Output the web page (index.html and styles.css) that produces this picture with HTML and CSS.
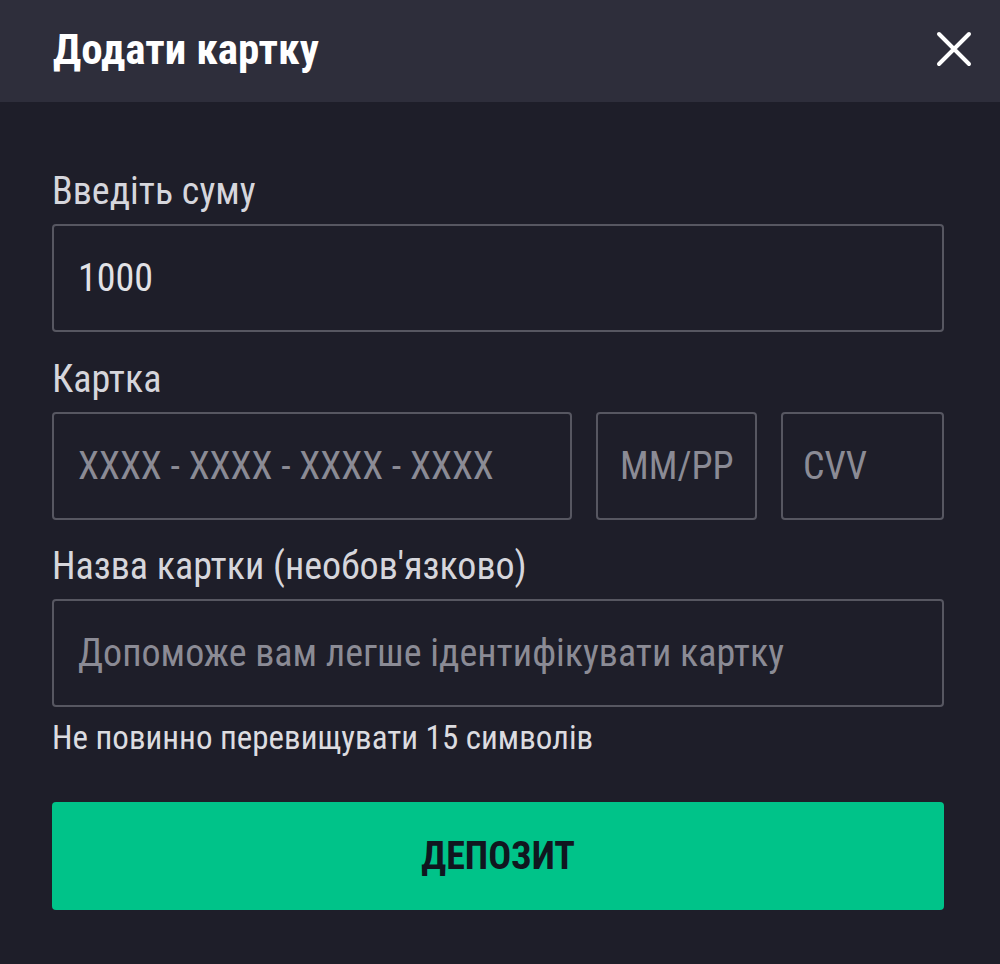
FILE: index.html
```html
<!DOCTYPE html>
<html lang="uk">
<head>
<meta charset="utf-8">
<title>Додати картку</title>
<link rel="stylesheet" href="styles.css">
</head>
<body>
<div class="modal">
  <header class="modal-header">
    <h1 class="modal-title">Додати картку</h1>
    <button class="close-btn" aria-label="Закрити">
      <svg viewBox="0 0 36 36" width="36" height="36"><path d="M3 3 L33 33 M33 3 L3 33" stroke="#ffffff" stroke-width="4" stroke-linecap="round" fill="none"/></svg>
    </button>
  </header>
  <div class="modal-body">
    <div class="field">
      <label class="field-label">Введіть суму</label>
      <div class="input"><span class="value">1000</span></div>
    </div>
    <div class="field field-card">
      <label class="field-label">Картка</label>
      <div class="card-row">
        <div class="input card-number"><span class="placeholder">XXXX - XXXX - XXXX - XXXX</span></div>
        <div class="input card-exp"><span class="placeholder">MM/PP</span></div>
        <div class="input card-cvv"><span class="placeholder">CVV</span></div>
      </div>
    </div>
    <div class="field field-last">
      <label class="field-label">Назва картки (необов'язково)</label>
      <div class="input"><span class="placeholder">Допоможе вам легше ідентифікувати картку</span></div>
      <div class="hint">Не повинно перевищувати 15 символів</div>
    </div>
    <button class="deposit-btn">ДЕПОЗИТ</button>
  </div>
</div>
</body>
</html>
```
FILE: styles.css
```css
* { box-sizing: border-box; }
html, body {
  margin: 0;
  padding: 0;
  background: #1e1e29;
  font-family: "Roboto Condensed", Roboto, "Liberation Sans", sans-serif;
}
.modal {
  width: 1000px;
  min-height: 964px;
  background: #1e1e29;
}
.modal-header {
  height: 102px;
  background: #2e2e3b;
  display: flex;
  align-items: center;
  justify-content: space-between;
  padding: 0 28px 4px 53px;
}
.modal-title {
  margin: 0;
  font-size: 43px;
  line-height: 48px;
  font-weight: 700;
  color: #ffffff;
}
.close-btn {
  background: none;
  border: 0;
  padding: 0;
  width: 36px;
  height: 36px;
  cursor: pointer;
}
.close-btn svg { display: block; }
.modal-body {
  padding: 69px 56px 0 52px;
}
.field { margin-bottom: 27px; }
.field-card { margin-bottom: 26px; }
.field-last { margin-bottom: 0; }
.field-label {
  display: block;
  font-size: 38px;
  line-height: 40px;
  color: #d6d6dc;
  margin-bottom: 13px;
}
.input {
  height: 108px;
  border: 2px solid #575761;
  border-radius: 4px;
  display: flex;
  align-items: center;
  padding: 0 24px;
  font-size: 38px;
}
.value { color: #e2e2e6; }
.placeholder { color: #8b8b95; }
.card-row {
  display: flex;
  gap: 24px;
}
.card-number { width: 520px; }
.card-exp { width: 161px; padding: 0 22px; }
.card-cvv { width: 163px; padding: 0 20px; }
.hint {
  margin-top: 13px;
  font-size: 33px;
  line-height: 36px;
  color: #dcdce0;
}
.deposit-btn {
  display: block;
  width: 892px;
  height: 108px;
  margin-top: 46px;
  border: 0;
  border-radius: 4px;
  background: #00c389;
  color: #10161f;
  font-family: inherit;
  font-size: 38px;
  font-weight: 700;
  cursor: pointer;
}
```
